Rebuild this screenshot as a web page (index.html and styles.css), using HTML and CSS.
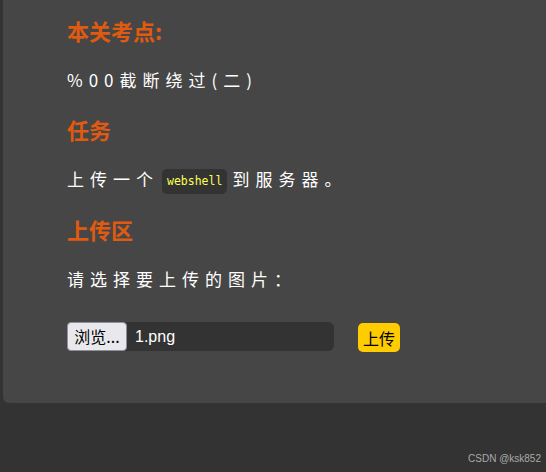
FILE: index.html
```html
<!DOCTYPE html>
<html lang="zh-CN">
<head>
  <meta charset="UTF-8">
  <meta name="viewport" content="width=device-width, initial-scale=1.0">
  <title>Pass-12</title>
  <link rel="stylesheet" href="styles.css">
</head>
<body>
  <div class="panel">
    <h3>本关考点:</h3>
    <p>%00截断绕过(二)</p>

    <h3>任务</h3>
    <p class="task">上传一个<code>webshell</code>到服务器。</p>

    <h3>上传区</h3>
    <p>请选择要上传的图片：</p>

    <form class="upload-form">
      <div class="file-box">
        <span class="file-btn">浏览...</span>
        <span class="file-name">1.png</span>
      </div>
      <button type="submit" class="upload-btn">上传</button>
    </form>
  </div>

  <div class="watermark">CSDN @ksk852</div>
</body>
</html>
```

FILE: styles.css
```css
body {
  margin: 0;
  height: 472px;
  overflow: hidden;
  background: #333;
  font-family: "Noto Sans CJK SC", "Liberation Sans", sans-serif;
  position: relative;
}
.panel {
  margin-left: 3px;
  padding: 15px 0 51px 64px;
  background: #464646;
  border-radius: 0 0 0 6px;
}
h3 {
  margin: 0 0 22px;
  font-size: 22px;
  line-height: 30px;
  font-weight: bold;
  color: #e05a10;
}
p {
  height: 26px;
  margin: 0 0 21px;
  font-size: 17px;
  line-height: 26px;
  letter-spacing: 6px;
  color: #fff;
}
p.task {
  margin-top: 2px;
  margin-bottom: 22px;
}
p:last-of-type {
  margin-bottom: 29px;
}
code {
  display: inline-block;
  margin: 0 5px 0 3px;
  padding: 0 5px;
  line-height: 25px;
  font-family: "DejaVu Sans Mono", monospace;
  font-size: 11.5px;
  letter-spacing: 0;
  color: #ffff55;
  background: #333;
  border-radius: 5px;
  vertical-align: middle;
}
.upload-form {
  display: flex;
  align-items: center;
  gap: 24px;
  margin: 0;
}
.file-box {
  display: flex;
  width: 267px;
  height: 29px;
  background: #333;
  border-radius: 6px;
}
.file-btn {
  box-sizing: border-box;
  width: 60px;
  height: 29px;
  line-height: 27px;
  text-align: center;
  font-size: 16px;
  color: #000;
  background: #e9e9ed;
  border: 1px solid #8f8f9d;
  border-radius: 4px;
}
.file-name {
  padding-left: 8px;
  line-height: 29px;
  font-family: "Liberation Sans", sans-serif;
  font-size: 16px;
  color: #fff;
}
.upload-btn {
  height: 29px;
  margin-top: 2px;
  padding: 0 5px;
  font-family: "Noto Sans CJK SC", sans-serif;
  font-size: 16px;
  color: #000;
  background: #ffcc00;
  border: none;
  border-radius: 5px;
}
.watermark {
  position: absolute;
  right: 5px;
  bottom: 8px;
  font-family: "Liberation Sans", sans-serif;
  font-size: 10px;
  color: #aaa;
}
```
